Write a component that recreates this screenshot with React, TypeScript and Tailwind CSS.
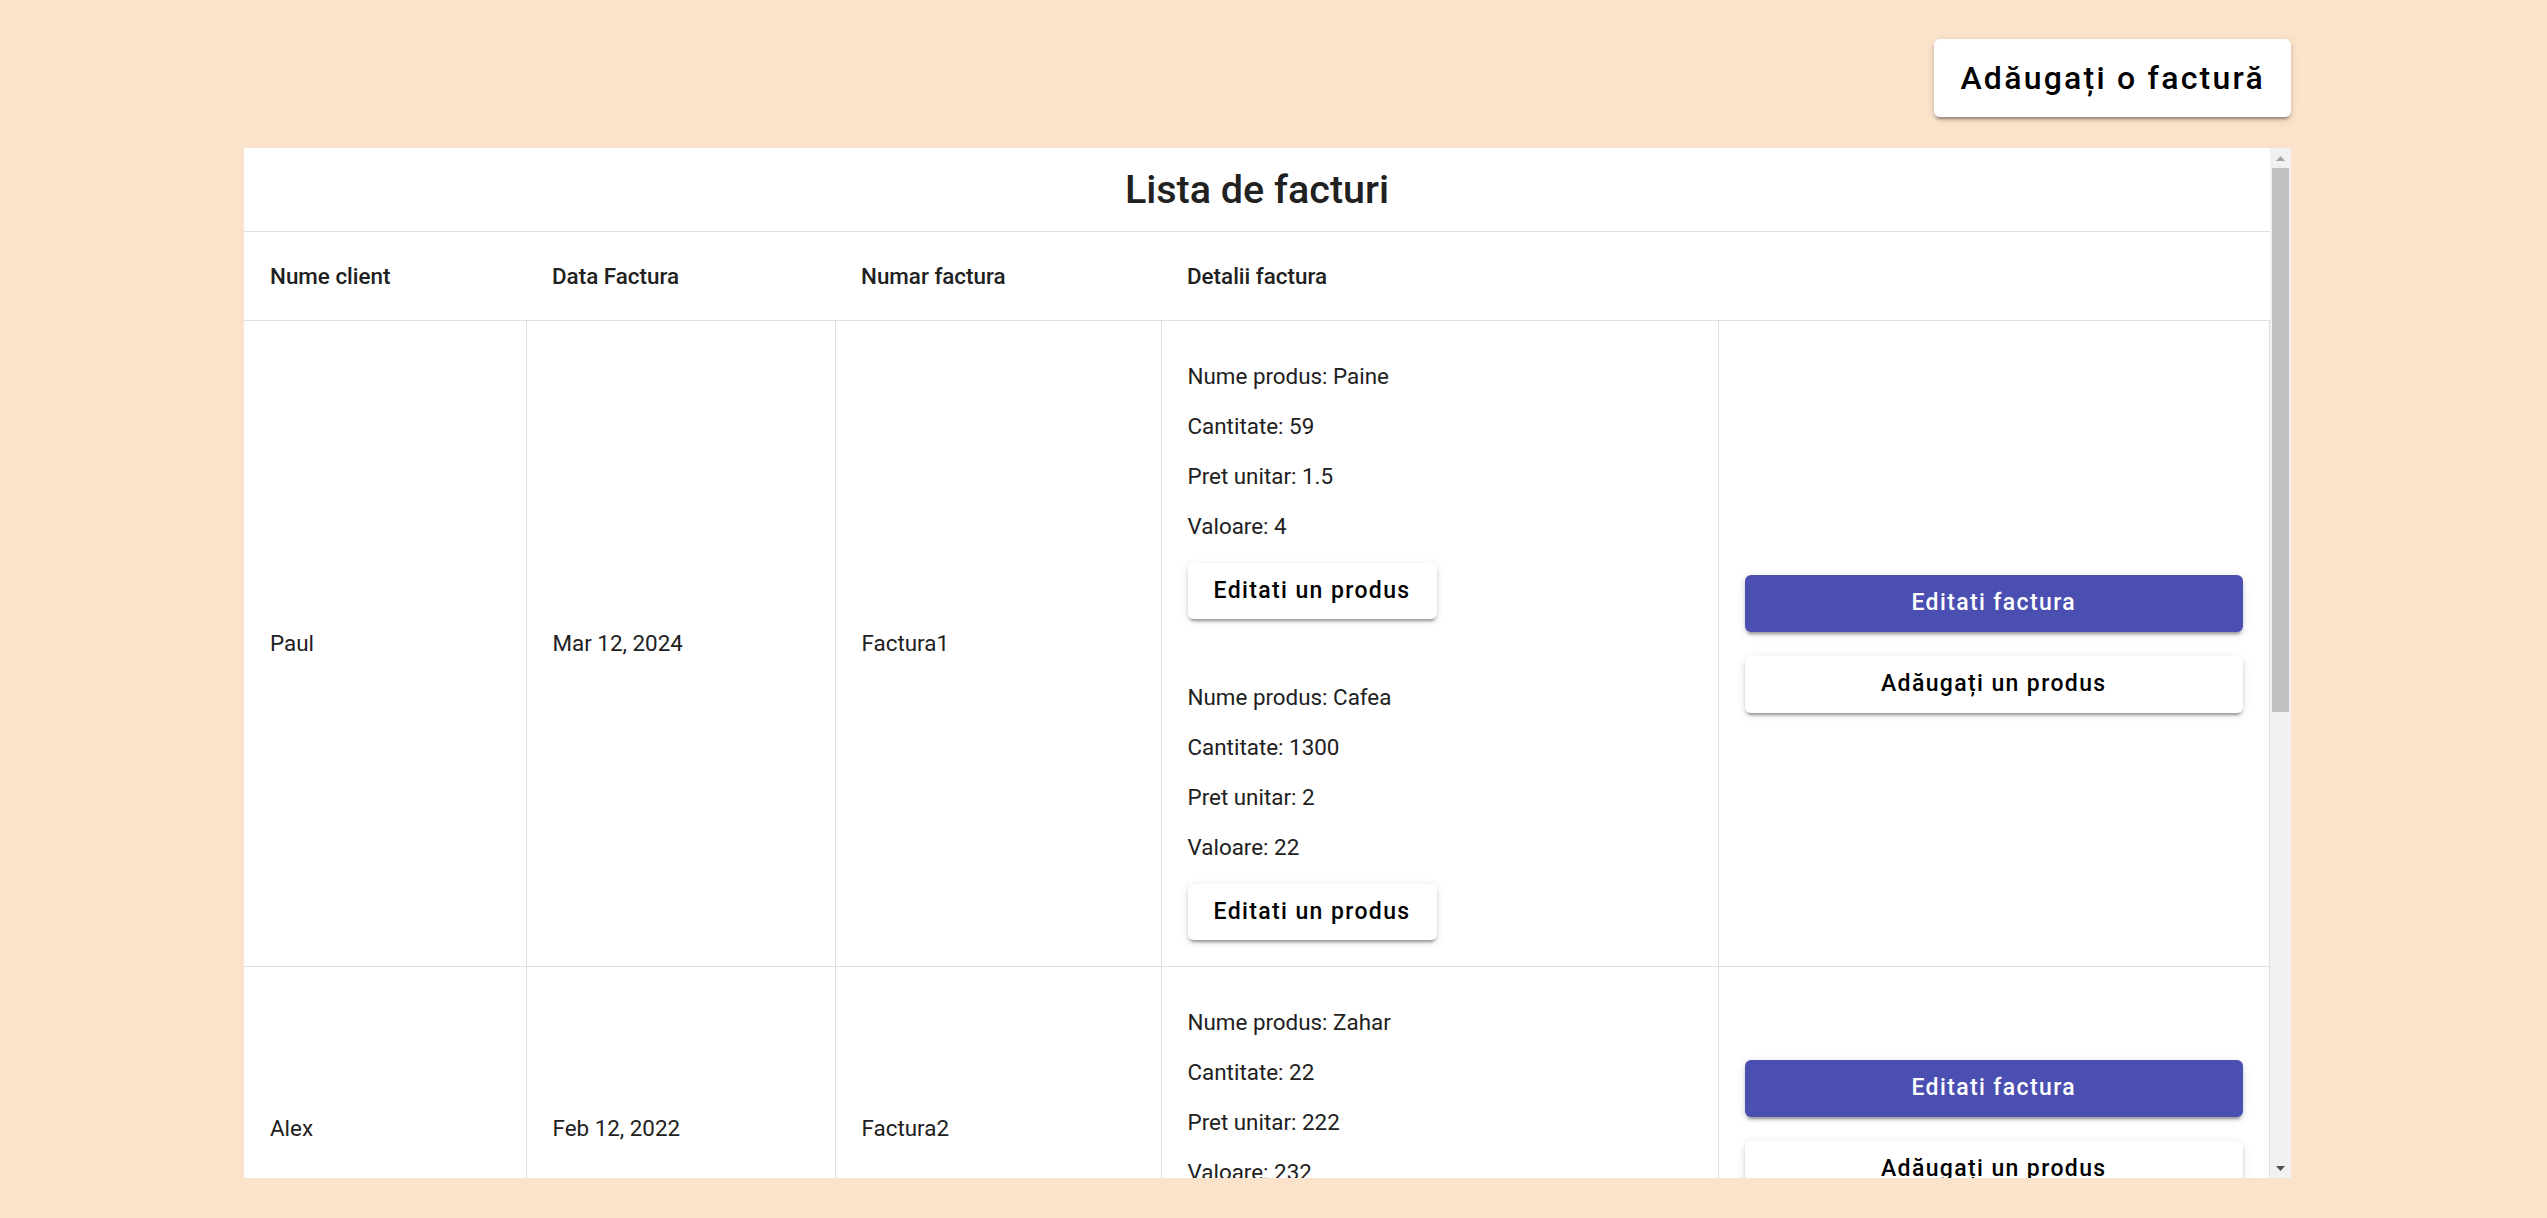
import React from "react";

interface Produs {
  nume: string;
  cantitate: number;
  pretUnitar: number;
  valoare: number;
}

interface Factura {
  id: number;
  client: string;
  data: string;
  numar: string;
  produse: Produs[];
}

const facturi: Factura[] = [
  {
    id: 1,
    client: "Paul",
    data: "Mar 12, 2024",
    numar: "Factura1",
    produse: [
      { nume: "Paine", cantitate: 59, pretUnitar: 1.5, valoare: 4 },
      { nume: "Cafea", cantitate: 1300, pretUnitar: 2, valoare: 22 },
    ],
  },
  {
    id: 2,
    client: "Alex",
    data: "Feb 12, 2022",
    numar: "Factura2",
    produse: [{ nume: "Zahar", cantitate: 22, pretUnitar: 222, valoare: 232 }],
  },
];

const shadow =
  "shadow-[0_5px_2px_-3px_rgba(0,0,0,0.2),0_3px_3px_0_rgba(0,0,0,0.14),0_2px_8px_0_rgba(0,0,0,0.12)]";

const cell = "border-r border-b border-[#e0e0e0] px-[26px] py-[26px] align-middle";
const head = "border-b border-[#e0e0e0] px-[26px] py-[25px] leading-[38px] font-medium";

const ProdusBlock = ({ p }: { p: Produs }) => (
  <div className="flex flex-col pt-[13px]">
    <div className="flex flex-col gap-[17px] leading-[33px]">
      <p>Nume produs: {p.nume}</p>
      <p>Cantitate: {p.cantitate}</p>
      <p>Pret unitar: {p.pretUnitar}</p>
      <p>Valoare: {p.valoare}</p>
    </div>
    <div className="mt-[20px]">
      <button
        className={`h-[56px] px-[26px] rounded-md bg-white text-black font-medium text-[23px] tracking-[0.06em] ${shadow}`}
      >
        Editati un produs
      </button>
    </div>
  </div>
);

// scrollbar drawn by hand, the headless browser hides native ones
const Scrollbar = () => (
  <div className="w-[21px] shrink-0 bg-[#f1f1f1] flex flex-col items-center">
    <div className="h-[20px] w-full flex items-center justify-center">
      <svg width="9" height="5" viewBox="0 0 9 5">
        <path d="M0 5 L4.5 0 L9 5 Z" fill="#a3a3a3" />
      </svg>
    </div>
    <div className="w-[17px] h-[544px] bg-[#c1c1c1]" />
    <div className="flex-1" />
    <div className="h-[20px] w-full flex items-center justify-center">
      <svg width="9" height="5" viewBox="0 0 9 5">
        <path d="M0 0 L9 0 L4.5 5 Z" fill="#505050" />
      </svg>
    </div>
  </div>
);

export default function App() {
  return (
    <div
      className="min-h-screen bg-[#fae2cb] pl-[244px] pr-[256px] pt-[39px] text-[#212121]"
      style={{ fontFamily: "Roboto, 'Noto Sans', sans-serif" }}
    >
      <div className="flex justify-end">
        <button
          className={`h-[78px] px-[26px] rounded-md bg-white text-black font-medium text-[32px] tracking-[0.07em] ${shadow}`}
        >
          Adăugați o factură
        </button>
      </div>

      <div className="mt-[31px] h-[1030px] flex bg-white">
        <div className="flex-1 overflow-hidden">
          <div className="h-[84px] flex items-center justify-center border-b border-[#e0e0e0]">
            <h2 className="text-[39.5px] font-medium">Lista de facturi</h2>
          </div>
          <table className="w-full table-fixed border-collapse text-[22.4px]">
            <colgroup>
              <col className="w-[282px]" />
              <col className="w-[309px]" />
              <col className="w-[326px]" />
              <col className="w-[557px]" />
              <col />
            </colgroup>
            <thead>
              <tr className="text-left">
                <th className={head}>Nume client</th>
                <th className={head}>Data Factura</th>
                <th className={head}>Numar factura</th>
                <th className={head}>Detalii factura</th>
                <th className="border-b border-[#e0e0e0]" />
              </tr>
            </thead>
            <tbody>
              {facturi.map((f) => (
                <tr key={f.id}>
                  <td className={cell}>{f.client}</td>
                  <td className={cell}>{f.data}</td>
                  <td className={cell}>{f.numar}</td>
                  <td className={cell}>
                    <div className="flex flex-col gap-[49px]">
                      {f.produse.map((p) => (
                        <ProdusBlock key={p.nume} p={p} />
                      ))}
                    </div>
                  </td>
                  <td className={cell}>
                    <div className="flex flex-col gap-[24px]">
                      <button
                        className={`h-[57px] w-full rounded-md bg-[#4a4fb1] text-white font-medium text-[23px] tracking-[0.06em] ${shadow}`}
                      >
                        Editati factura
                      </button>
                      <button
                        className={`h-[57px] w-full rounded-md bg-white text-black font-medium text-[23px] tracking-[0.06em] ${shadow}`}
                      >
                        Adăugați un produs
                      </button>
                    </div>
                  </td>
                </tr>
              ))}
            </tbody>
          </table>
        </div>
        <Scrollbar />
      </div>
    </div>
  );
}
